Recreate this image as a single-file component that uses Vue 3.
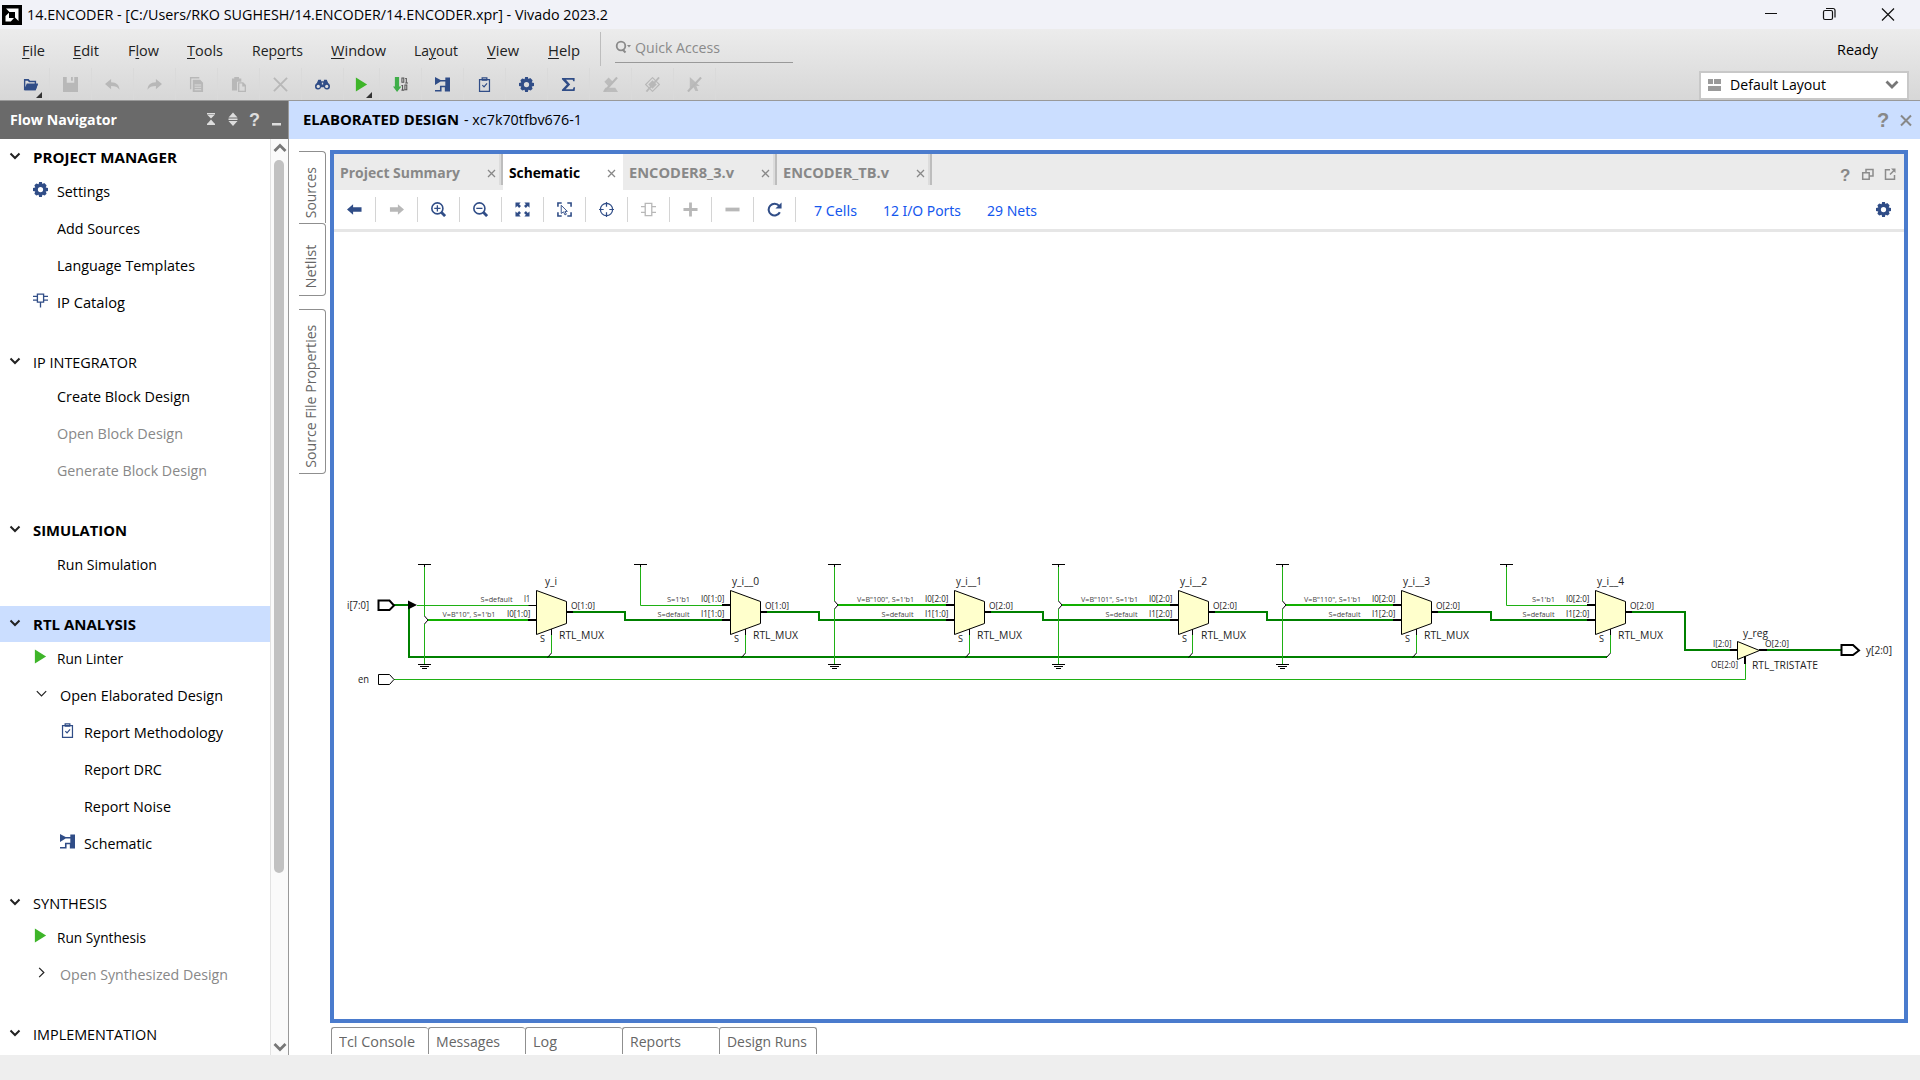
<script setup>
// Stretches or condenses a label so that it occupies exactly the given width.
const vFit = {
  mounted(el, { value }) {
    const apply = () => {
      el.style.width = 'max-content'
      el.style.transform = 'none'
      const natural = el.getBoundingClientRect().width
      el.style.width = value + 'px'
      if (natural > 0) el.style.transform = `scaleX(${value / natural})`
    }
    apply()
    document.fonts.ready.then(apply)
  },
}
const vFitV = {
  mounted(el, { value }) {
    const natural = el.getBoundingClientRect().height
    if (natural > 0) el.style.transform = `rotate(180deg) scaleY(${value / natural})`
  },
}

const menus = [
  { a: '', k: 'F', b: 'ile', x: 22, w: 23 },
  { a: '', k: 'E', b: 'dit', x: 73, w: 26 },
  { a: 'F', k: 'l', b: 'ow', x: 128, w: 31 },
  { a: '', k: 'T', b: 'ools', x: 187, w: 36 },
  { a: 'Rep', k: 'o', b: 'rts', x: 252, w: 51 },
  { a: '', k: 'W', b: 'indow', x: 331, w: 55 },
  { a: 'La', k: 'y', b: 'out', x: 414, w: 44 },
  { a: '', k: 'V', b: 'iew', x: 487, w: 32 },
  { a: '', k: 'H', b: 'elp', x: 548, w: 32 },
].map((m, i, all) => ({ ...m, gap: i ? m.x - all[i - 1].x - all[i - 1].w : m.x }))

const tools = [
  { icon: 'folder', menu: true }, { icon: 'save', off: true }, { icon: 'undo', off: true },
  { icon: 'redo', off: true }, { icon: 'copy', off: true }, { icon: 'paste', off: true },
  { icon: 'cross', off: true }, { icon: 'binoculars' }, { icon: 'play', menu: true, narrow: true },
  { icon: 'bits' }, { icon: 'schematic' }, { icon: 'clipboard' }, { icon: 'gear' },
  { icon: 'sigma' }, { icon: 'nomark', off: true }, { icon: 'nochip', off: true }, { icon: 'nocursor', off: true },
]

const sections = [
  { t: 'PROJECT MANAGER', w: 144, bold: true, items: [
    { t: 'Settings', w: 53, icon: 'gear' }, { t: 'Add Sources', w: 83 },
    { t: 'Language Templates', w: 138 }, { t: 'IP Catalog', w: 68, icon: 'ip' } ] },
  { t: 'IP INTEGRATOR', w: 104, items: [
    { t: 'Create Block Design', w: 133 }, { t: 'Open Block Design', w: 126, off: true },
    { t: 'Generate Block Design', w: 150, off: true } ] },
  { t: 'SIMULATION', w: 94, bold: true, items: [{ t: 'Run Simulation', w: 100 }] },
  { t: 'RTL ANALYSIS', w: 103, bold: true, active: true, items: [
    { t: 'Run Linter', w: 66, icon: 'play' },
    { t: 'Open Elaborated Design', w: 163, icon: 'down', kind: 'sub' },
    { t: 'Report Methodology', w: 139, icon: 'clipboard', kind: 'deep' },
    { t: 'Report DRC', w: 78, kind: 'deep' }, { t: 'Report Noise', w: 87, kind: 'deep' },
    { t: 'Schematic', w: 68, icon: 'schematic', kind: 'deep' } ] },
  { t: 'SYNTHESIS', w: 74, items: [
    { t: 'Run Synthesis', w: 89, icon: 'play' },
    { t: 'Open Synthesized Design', w: 168, icon: 'right', kind: 'sub', off: true } ] },
  { t: 'IMPLEMENTATION', w: 124, items: [] },
]

const sideTabs = [
  { t: 'Sources', h: 72, w: 51, pad: 10 }, { t: 'Netlist', h: 73, w: 44, pad: 15 }, { t: 'Source File Properties', h: 165, w: 143, pad: 10, apart: true },
]
const tabs = [
  { t: 'Project Summary', w: 120, tab: 169, line: true },
  { t: 'Schematic', w: 71, tab: 120, on: true },
  { t: 'ENCODER8_3.v', w: 105, tab: 154, line: true },
  { t: 'ENCODER_TB.v', w: 106, tab: 155, line: true },
]
const viewTools = [
  { icon: 'left' }, { icon: 'rightarrow', off: true }, { icon: 'zoomin' }, { icon: 'zoomout' }, { icon: 'fit' },
  { icon: 'select' }, { icon: 'target' }, { icon: 'cell', off: true }, { icon: 'plus', off: true },
  { icon: 'minus', off: true }, { icon: 'reload' },
]
const links = [{ t: '7 Cells', w: 43, gap: 18 }, { t: '12 I/O Ports', w: 78, gap: 26 }, { t: '29 Nets', w: 50, gap: 26 }]
const bottomTabs = [
  { t: 'Tcl Console', w: 76 }, { t: 'Messages', w: 64 }, { t: 'Log', w: 24 }, { t: 'Reports', w: 51 }, { t: 'Design Runs', w: 80 },
]

// Each mux: x of the body, s pin, tie-off column, next wire step, labels of its two inputs.
const muxes = [
  { x: 536.5, s: 551.5, tie: 424.5, step: 625, name: 'y_i', nx: 545, nw: 12, p0: 'I1', p1: 'I0[1:0]', o: 'O[1:0]', a: 'S=default', b: 'V=B"10", S=1\'b1', kind: 'first' },
  { x: 730.5, s: 745.5, tie: 640.5, step: 819, name: 'y_i__0', nx: 732, nw: 27, p0: 'I0[1:0]', p1: 'I1[1:0]', o: 'O[1:0]', a: 'S=1\'b1', b: 'S=default', kind: 'up' },
  { x: 954.5, s: 969.5, tie: 834.5, step: 1043, name: 'y_i__1', nx: 956, nw: 26, p0: 'I0[2:0]', p1: 'I1[1:0]', o: 'O[2:0]', a: 'V=B"100", S=1\'b1', b: 'S=default', kind: 'bus' },
  { x: 1178.5, s: 1192.5, tie: 1058.5, step: 1267, name: 'y_i__2', nx: 1180, nw: 27, p0: 'I0[2:0]', p1: 'I1[2:0]', o: 'O[2:0]', a: 'V=B"101", S=1\'b1', b: 'S=default', kind: 'bus' },
  { x: 1401.5, s: 1416.5, tie: 1282.5, step: 1491, name: 'y_i__3', nx: 1403, nw: 27, p0: 'I0[2:0]', p1: 'I1[2:0]', o: 'O[2:0]', a: 'V=B"110", S=1\'b1', b: 'S=default', kind: 'bus' },
  { x: 1595.5, s: 1610.5, tie: 1506.5, step: 1685, name: 'y_i__4', nx: 1597, nw: 27, p0: 'I0[2:0]', p1: 'I1[2:0]', o: 'O[2:0]', a: 'S=1\'b1', b: 'S=default', kind: 'up' },
]
const noteWidth = (s) => ({ 'S=default': 32, "S=1'b1": 23, 'V=B"10", S=1\'b1': 53 }[s] || 57)
const noteEnd = (m) => (m.kind === 'first' ? m.x - 24 : m.x - 40.5)
</script>

<template>
  <svg class="defs" width="0" height="0">
    <symbol id="folder" viewBox="0 0 16 16"><path d="M1 13V2h5l1.500 2H14v3h-1.500V5.500H6.500L5 4H2.500v7L4 7h12l-2.500 7H1z" /><path d="M4.500 7.500H16L13.500 14H2z" /></symbol>
    <symbol id="save" viewBox="0 0 16 16"><path d="M0 0h4v6h8V0h4v16H0z" /><path d="M8.500 0h2v4h-2z" /></symbol>
    <symbol id="undo" viewBox="0 0 16 16"><path d="M0 7.500 6.500 2v3.500c6 0 8.500 3 9 8C13.500 10.500 11 9.500 6.500 9.500V13z" /></symbol>
    <symbol id="redo" viewBox="0 0 16 16"><path d="M16 7.500 9.500 2v3.500c-6 0-8.500 3-9 8 2-3 4.500-4 9-4V13z" /></symbol>
    <symbol id="copy" viewBox="0 0 16 16"><path d="M1 0h10v1.500H2.500V13H1z" /><path fill-rule="evenodd" d="M4 3h8l3 3v10H4zm2 5v1h7V8zm0 2.500v1h7v-1zm0 2.500v1h7v-1z" /></symbol>
    <symbol id="paste" viewBox="0 0 16 16"><path d="M1 1.500h2.500V0h5v1.500H11V5H6.500v9.500H1z" /><path fill-rule="evenodd" d="M7.500 5.500H13l3 3V16H7.500zm1.400 1.400v7.700h5.700V10H12V6.900z" /></symbol>
    <symbol id="cross" viewBox="0 0 16 16"><path d="m1 1 14 14M15 1 1 15" fill="none" stroke="currentColor" stroke-width="2" /></symbol>
    <symbol id="binoculars" viewBox="0 0 16 16"><path d="M3.500 3h3v1.500h3V3h3l1.500 3.500c1.500.8 2 2 2 3.500a3.300 3.300 0 0 1-6.500.8h-3A3.300 3.300 0 0 1 0 10c0-1.500.5-2.700 2-3.500z" /><circle cx="3.500" cy="10" r="1.700" fill="#dfdfdf" /><circle cx="12.500" cy="10" r="1.700" fill="#dfdfdf" /><path d="M7.300 6h1.400v2H7.300z" fill="#dfdfdf" /></symbol>
    <symbol id="play" viewBox="0 0 16 16"><path d="M2 .5 14 8 2 15.500z" fill="#3eb529" /></symbol>
    <symbol id="bits" viewBox="0 0 16 16"><path d="M2 0h4.500v10H9l-4.700 6L0 10h2z" fill="#3fae49" /><g fill="none" stroke="#555" stroke-width="1.100"><path d="M9.500 1h2v4.500h-2zM13 1.500h1.200v4.500M9 9h1.200v4.500M12.700 8.500h2v5h-2zM13 6.300h3M9 14h3" /></g></symbol>
    <symbol id="schematic" viewBox="0 0 16 16"><path d="M0 0 6 3.200H11V.5h5v15h-5.500V11H7v4.500H0v-1.700h5.300V9.300H11V4.900H6L0 8.500z" /></symbol>
    <symbol id="clipboard" viewBox="0 0 16 16"><path d="M2.700 2.700h10.600v12.600H2.700zM5.500 3V1h5v2" fill="none" stroke="currentColor" stroke-width="1.300" /><path d="M5 2.500h6V4H5z" /><path d="m5.700 8.700 1.800 1.800 3.200-3.700" fill="none" stroke="currentColor" stroke-width="1.300" /></symbol>
    <symbol id="gear" viewBox="0 0 16 16"><path fill-rule="evenodd" d="M6.500 0h3l.5 2.200 2-1.200L14.500 3.500 13.600 5.800l2.400.7v3l-2.400.6.9 2.400-2 2-2.500-1-.5 2.500h-3L6 13.500l-2.500 1-2-2 .9-2.400L0 9.500v-3l2.400-.7L1.500 3.500l2-2L6 2.400zM8 5.200a2.800 2.800 0 1 0 0 5.600 2.800 2.800 0 0 0 0-5.600z" /></symbol>
    <symbol id="sigma" viewBox="0 0 16 16"><path d="M1 1h13.500v3.500H13L12.500 3H5.300l4.500 5-4.800 5h7.700l.7-2H15l-.5 4H1v-1.500L6.300 8 1 2.500z" /></symbol>
    <symbol id="nomark" viewBox="0 0 16 16"><path d="M1.500 5 6 .5 10.500 5 6 10zM0 16l2.500-4.500H13L16 16z" opacity=".9" /><path d="M15 .5 1.500 15.500" stroke="currentColor" stroke-width="2.200" /></symbol>
    <symbol id="nochip" viewBox="0 0 16 16"><path d="m8 .7 7.300 7.300L8 15.300.7 8z" fill="none" stroke="currentColor" stroke-width="1.200" /><path d="m8 3.500 4.500 4.500L8 12.500 3.500 8z" /><path d="M15 .5 1.500 15.500" stroke="currentColor" stroke-width="2" /></symbol>
    <symbol id="nocursor" viewBox="0 0 16 16"><path d="m3 0 10.500 9.500H10l2 5.500H9l-2-4-4 3z" opacity=".9" /><path d="M15 .5 1 15.500" stroke="currentColor" stroke-width="2.200" /></symbol>
    <symbol id="ip" viewBox="0 0 16 16"><path d="M4.700 1.200h6.600v8.600H4.700zM0 3.500h4.500M0 7.500h4.500M11.500 3.500H16M11.500 7.500H16M8 10v5.500" fill="none" stroke="currentColor" stroke-width="1.400" /></symbol>
    <symbol id="down" viewBox="0 0 16 16"><path d="m3 5.500 5 5 5-5" fill="none" stroke="#222" stroke-width="1.300" /></symbol>
    <symbol id="right" viewBox="0 0 16 16"><path d="m5.500 3 5 5-5 5" fill="none" stroke="#222" stroke-width="1.300" /></symbol>
    <symbol id="left" viewBox="0 0 16 16"><path d="m0 8 6.500-5.500v3H15.500v5h-9v3z" /></symbol>
    <symbol id="rightarrow" viewBox="0 0 16 16"><path d="M16 8 9.500 2.500v3H1v5h8.500v3z" /></symbol>
    <symbol id="zoomin" viewBox="0 0 16 16"><path d="M6.800 3.500v6.600M3.500 6.800h6.600" stroke="currentColor" stroke-width="1.400" /><circle cx="6.800" cy="6.800" r="5.900" fill="none" stroke="currentColor" stroke-width="1.700" /><path d="m11 11 4 4" stroke="currentColor" stroke-width="3" /></symbol>
    <symbol id="zoomout" viewBox="0 0 16 16"><path d="M3.500 6.800h6.600" stroke="currentColor" stroke-width="1.400" /><circle cx="6.800" cy="6.800" r="5.900" fill="none" stroke="currentColor" stroke-width="1.700" /><path d="m11 11 4 4" stroke="currentColor" stroke-width="3" /></symbol>
    <symbol id="fit" viewBox="0 0 16 16"><path d="M.5.500H6L4.400 2.300l2 2-2 2-2-2L.5 6zM15.500.5H10l1.600 1.800-2 2 2 2 2-2L15.500 6zM.5 15.500H6l-1.600-1.800 2-2-2-2-2 2L.5 10zM15.500 15.500H10l1.600-1.800-2-2 2-2 2 2L15.500 10z" /></symbol>
    <symbol id="select" viewBox="0 0 16 16"><path d="M1 5V1h4M11 1h4v4M15 11v4h-4M5 15H1v-4" fill="none" stroke="currentColor" stroke-width="1.700" /><path d="m4.500 3.500 6.500 6.500H8.500l1.500 3-1.500.8L7 10.500l-2.500 1.700z" fill="none" stroke="currentColor" /></symbol>
    <symbol id="target" viewBox="0 0 16 16"><circle cx="8" cy="8" r="6.500" fill="none" stroke="currentColor" stroke-width="1.300" /><path d="M8 0v5M8 11v5M0 8h5M11 8h5" stroke="currentColor" stroke-width="1.300" /></symbol>
    <symbol id="cell" viewBox="0 0 16 16"><path d="M4.500 1.500h7v13h-7zM0 5h4.500M0 11h4.500M11.500 5H16M11.500 11H16" fill="none" stroke="currentColor" stroke-width="1.400" /></symbol>
    <symbol id="plus" viewBox="0 0 16 16"><path d="M6.500.5h3v6h6v3h-6v6h-3v-6h-6v-3h6z" /></symbol>
    <symbol id="minus" viewBox="0 0 16 16"><path d="M.5 6h15v4H.5z" /></symbol>
    <symbol id="reload" viewBox="0 0 16 16"><path d="M13 4.200A6.300 6.300 0 1 0 13.700 11" fill="none" stroke="currentColor" stroke-width="2.200" /><path d="M15.500.5V7H9z" /></symbol>
  </svg>

  <div class="app">
    <header class="titlebar">
      <svg class="logo" viewBox="0 0 20 20"><path d="M0 0h20v20H0z" fill="#000" /><path d="M4 3.500h12.500V16L13 12.500V7H7.500zM3.500 11 7 7.800V13h5l-3.200 3.500H3.500z" fill="#fff" /></svg>
      <span v-fit="581" class="fit title">14.ENCODER - [C:/Users/RKO SUGHESH/14.ENCODER/14.ENCODER.xpr] - Vivado 2023.2</span>
      <svg class="winbtns" viewBox="0 0 160 29" fill="none" stroke="#111" stroke-width="1.200"><path d="M5 13.500h12M122 8.500l12 12M134 8.500l-12 12" /><rect x="63.500" y="10.500" width="9" height="9" rx="1.500" /><path d="M66 8.500h7q2 0 2 2v7" /></svg>
    </header>

    <div class="chrome">
      <div class="menurow">
        <span v-for="m in menus" :key="m.x" v-fit="m.w" class="fit menu" :style="{ marginLeft: m.gap + 'px' }">{{ m.a }}<u>{{ m.k }}</u>{{ m.b }}</span>
        <i class="vline"></i>
        <div class="search">
          <svg width="17" height="15" viewBox="0 0 17 15"><circle cx="6" cy="7" r="4.300" fill="none" stroke="#8a8a8a" stroke-width="1.800" /><path d="m7.500 10.500 3 3" stroke="#8a8a8a" stroke-width="2" /><path d="M12 6h4l-2 2.500z" fill="#8a8a8a" /></svg>
          <span v-fit="85" class="fit">Quick Access</span>
        </div>
        <span v-fit="41" class="fit ready">Ready</span>
      </div>
      <div class="toolrow">
        <div v-for="(t, i) in tools" :key="i" class="tool" :class="{ off: t.off, narrow: t.narrow }">
          <svg class="ico"><use :href="'#' + t.icon" /></svg>
          <svg v-if="t.menu" class="corner" viewBox="0 0 5 5"><path d="M5 0v5H0z" /></svg>
        </div>
        <div class="layout">
          <svg width="13" height="12" viewBox="0 0 13 12"><path d="M0 0h5v5H0zM6 0h7v5H6zM0 7h13v5H0z" fill="#9a9a9a" /></svg>
          <span v-fit="96" class="fit">Default Layout</span>
          <svg class="chev" width="14" height="10" viewBox="0 0 14 10"><path d="m1.500 1.500 5.500 5.500 5.500-5.500" fill="none" stroke="#777" stroke-width="2.800" /></svg>
        </div>
      </div>
    </div>

    <div class="body">
      <aside class="nav">
        <div class="navhead">
          <b v-fit="107" class="fit">Flow Navigator</b>
          <svg width="90" height="37" viewBox="0 0 90 37" fill="#ddd"><path d="M7 12h8v1.500H7zM7 24h8v-1.500H7zM11 17.500 7.500 14h7zM11 18.500l-3.500 4h7zM33 11.500l4.500 5h-9zM33 25l4.500-5h-9zM28.500 17.500h9v1.500h-9zM72 22h9v2.500h-9z" /><text x="49" y="25" class="q">?</text></svg>
        </div>
        <div class="navbody">
          <div class="tree">
            <section v-for="s in sections" :key="s.t">
              <div class="sec" :class="{ bold: s.bold, active: s.active }">
                <svg width="12" height="8" viewBox="0 0 12 8"><path d="m1.500 1.500 4.500 4.500 4.500-4.500" fill="none" stroke="#222" stroke-width="2" /></svg>
                <span v-fit="s.w" class="fit">{{ s.t }}</span>
              </div>
              <div v-for="it in s.items" :key="it.t" class="item" :class="[it.kind, { off: it.off }]">
                <span class="slot"><svg v-if="it.icon" class="ico"><use :href="'#' + it.icon" /></svg></span>
                <span v-fit="it.w" class="fit">{{ it.t }}</span>
              </div>
            </section>
          </div>
          <div class="scroll">
            <svg width="14" height="9" viewBox="0 0 14 9"><path d="m1.500 8 5.500-5.500L12.500 8" fill="none" stroke="#777" stroke-width="2.800" /></svg>
            <div class="thumb"></div>
            <svg width="14" height="9" viewBox="0 0 14 9"><path d="m1.500 1 5.500 5.500L12.500 1" fill="none" stroke="#777" stroke-width="2.800" /></svg>
          </div>
        </div>
      </aside>

      <main class="work">
        <div class="workhead">
          <b v-fit="156" class="fit">ELABORATED DESIGN</b>
          <span v-fit="118" class="fit part">- xc7k70tfbv676-1</span>
          <svg width="48" height="37" viewBox="0 0 48 37"><text x="5" y="26" class="q dark">?</text><path d="m29 14.500 10 10M39 14.500l-10 10" stroke="#888" stroke-width="2" /></svg>
        </div>
        <div class="workbody">
          <div class="sidetabs">
            <div v-for="s in sideTabs" :key="s.t" class="sidetab" :class="{ apart: s.apart }" :style="{ height: s.h + 'px', paddingTop: s.pad + 'px' }">
              <span v-fit-v="s.w">{{ s.t }}</span>
            </div>
          </div>
          <div class="center">
            <div class="frame">
              <div class="tabs">
                <div v-for="t in tabs" :key="t.t" class="tab" :class="{ on: t.on, line: t.line }" :style="{ width: t.tab + 'px' }">
                  <b v-fit="t.w" class="fit">{{ t.t }}</b>
                  <svg width="9" height="9" viewBox="0 0 9 9"><path d="m1 1 7 7M8 1 1 8" stroke="#888" stroke-width="1.300" /></svg>
                </div>
                <svg class="tabctl" width="64" height="36" viewBox="0 0 64 36" fill="none" stroke="#8c8c8c" stroke-width="1.500"><text x="0" y="27" class="q dark small">?</text><path d="M22.700 18.700h6.500v6.500h-6.500zM26 18v-2.500h7v6.500h-3.500M50 15.800h-4.500v9.500h9V21M50 20.500l4-4" /><path d="M51 14.500h4.500V19z" fill="#8c8c8c" stroke="none" /></svg>
              </div>
              <div class="viewbar">
                <div v-for="(t, i) in viewTools" :key="i" class="vtool" :class="{ off: t.off }"><svg class="ico"><use :href="'#' + t.icon" /></svg></div>
                <span v-for="l in links" :key="l.t" v-fit="l.w" class="fit link" :style="{ marginLeft: l.gap + 'px' }">{{ l.t }}</span>
                <svg class="ico end"><use href="#gear" /></svg>
              </div>
              <svg class="canvas" viewBox="334 232 1570 787">
                <g class="bus">
                  <path d="M394 605H409M409 605V657H1607" />
                  <path d="M1685 650H1730M1767 650H1841" />
                </g>
                <g class="net">
                  <path d="M417 605.500H529M394 679.500H1745.500V664" />
                </g>
                <g v-for="(m, i) in muxes" :key="m.name">
                  <path class="bus" :d="`M${m.x + 36.500} 612H${m.step}V${i === 5 ? 651 : 620}H${i === 5 ? m.step : muxes[i + 1].x - 8}`" />
                  <template v-if="m.kind === 'up'">
                    <path class="net" :d="`M${m.tie} 566V605.500H${m.x - 8}`" />
                  </template>
                  <template v-else>
                    <path class="net" :d="`M${m.tie} 566V${m.kind === 'first' ? 616 : 601}M${m.tie} ${m.kind === 'first' ? 624 : 609}V664`" />
                    <path class="ink" :d="m.kind === 'first' ? `M${m.tie} 616L${m.tie + 3.500} 620L${m.tie} 624` : `M${m.tie} 601L${m.tie + 3.500} 605L${m.tie} 609`" />
                    <path class="bright" :d="`M${m.tie + 3.500} ${m.kind === 'first' ? 620 : 605}H${m.x - 8}`" />
                    <path class="ink crisp" :d="`M${m.tie - 6.500} 664.500h13M${m.tie - 4.500} 666.500h9M${m.tie - 2.500} 668.500h5`" />
                  </template>
                  <path class="ink crisp" :d="`M${m.tie - 6.500} 564.500h13M${m.tie} 564v3`" />
                  <path class="net" :d="`M${m.s} 635V653`" />
                  <path class="ink" :d="`M${m.s} 628V635M${m.s} 653L${m.s - 4} 657.500`" />
                  <path v-if="m.kind === 'first'" class="ink" :d="`M${m.x - 8} 605.500h8`" />
                  <path v-else class="pin" :d="`M${m.x - 8.500} 605h8`" />
                  <path class="pin" :d="`M${m.x - 8.500} 620h8M${m.x + 30} 612h6.500`" />
                  <path class="cell" :d="`M${m.x} 590.500l30 11v22l-30 11z`" />
                  <text class="name" :x="m.nx" y="585" :textLength="m.nw" lengthAdjust="spacingAndGlyphs">{{ m.name }}</text>
                  <text class="name" :x="m.x + 22.500" y="639" textLength="45" lengthAdjust="spacingAndGlyphs">RTL_MUX</text>
                  <text class="port" :x="m.x + 3.500" y="641.500" textLength="5" lengthAdjust="spacingAndGlyphs">S</text>
                  <text class="port" :x="m.x + 34.500" y="609" textLength="24" lengthAdjust="spacingAndGlyphs">{{ m.o }}</text>
                  <text class="port" :x="m.x - (m.p0 === 'I1' ? 12.500 : 29.500)" y="602" :textLength="m.p0 === 'I1' ? 6 : 23.500" lengthAdjust="spacingAndGlyphs">{{ m.p0 }}</text>
                  <text class="port" :x="m.x - 29.500" y="617" textLength="23.500" lengthAdjust="spacingAndGlyphs">{{ m.p1 }}</text>
                  <text class="note" :x="noteEnd(m) - noteWidth(m.a)" y="602" :textLength="noteWidth(m.a)" lengthAdjust="spacingAndGlyphs">{{ m.a }}</text>
                  <text class="note" :x="m.x - 41 - noteWidth(m.b)" y="617" :textLength="noteWidth(m.b)" lengthAdjust="spacingAndGlyphs">{{ m.b }}</text>
                </g>
                <path d="M408 600.500 417 605l-9 4.500z" />
                <path class="pin" d="M378.500 600.500H389.500L394 605.500 389.500 610H378.500zM1841.500 645H1853L1859 650.500 1853 655H1841.500z" />
                <path class="ink" d="M378.500 674.500H389.500L394 679.500 389.500 684.500H378.500z" />
                <path class="pin" d="M1730 650h8M1759 650h8" />
                <path class="cell" d="M1737.500 641.500 1759.500 650.500 1737.500 659.500z" />
                <path class="pin" d="M1745 656v8" />
                <text class="name" x="347" y="609" textLength="22" lengthAdjust="spacingAndGlyphs">i[7:0]</text>
                <text class="name" x="358" y="683" textLength="11" lengthAdjust="spacingAndGlyphs">en</text>
                <text class="name" x="1866" y="654" textLength="26" lengthAdjust="spacingAndGlyphs">y[2:0]</text>
                <text class="name" x="1743" y="637" textLength="25" lengthAdjust="spacingAndGlyphs">y_reg</text>
                <text class="name" x="1752" y="669" textLength="66" lengthAdjust="spacingAndGlyphs">RTL_TRISTATE</text>
                <text class="port" x="1713" y="647" textLength="18.500" lengthAdjust="spacingAndGlyphs">I[2:0]</text>
                <text class="port" x="1765" y="647" textLength="24" lengthAdjust="spacingAndGlyphs">O[2:0]</text>
                <text class="port" x="1711" y="668" textLength="27" lengthAdjust="spacingAndGlyphs">OE[2:0]</text>
              </svg>
            </div>
            <div class="bottomtabs">
              <div v-for="b in bottomTabs" :key="b.t" class="btab"><span v-fit="b.w" class="fit">{{ b.t }}</span></div>
            </div>
          </div>
        </div>
      </main>
    </div>
    <footer class="status"></footer>
  </div>
</template>

<style>
html, body { margin: 0; overflow: hidden; }
</style>

<style scoped>
.defs { position: absolute; }
.app { width: 1920px; height: 1080px; display: flex; flex-direction: column; background: #fff; color: #000; font: 15px/20px "Open Sans", "Noto Sans", sans-serif; overflow: hidden; }
svg { display: block; flex: none; }
.fit { display: block; flex: none; white-space: nowrap; transform-origin: 0 50%; }
.ico { width: 15px; height: 15px; fill: currentColor; overflow: visible; }
.titlebar { height: 29px; flex: none; display: flex; align-items: center; background: #f1f2f8; padding-left: 2px; }
.logo { width: 20px; height: 20px; margin-right: 5px; }
.title { margin-bottom: 2px; }
.winbtns { width: 160px; height: 29px; margin-left: auto; }
.chrome { height: 71px; flex: none; background: linear-gradient(#ececec, #d7d7d7); border-bottom: 1px solid #999; color: #222; }
.menurow { height: 39px; display: flex; align-items: flex-start; }
.menu { margin-top: 11px; }
.menu u { text-underline-offset: 2px; text-decoration-thickness: 1px; }
.vline { width: 1px; height: 34px; margin: 3px 14px 0 20px; background: #bdbdbd; }
.search { width: 178px; height: 31px; display: flex; align-items: center; border-bottom: 1px solid #999; color: #8a8a8a; gap: 3px; padding-top: 2px; }
.ready { margin: 10px 42px 0 auto; color: #000; }
.toolrow { height: 32px; display: flex; align-items: center; padding-left: 7px; }
.tool { position: relative; width: 41px; height: 32px; border-right: 1px solid #dadada; display: flex; align-items: center; justify-content: center; color: #304d87; }
.tool:nth-child(1) { padding-left: 4px; width: 38px; }
.tool.narrow { width: 35px; }
.off { color: #b4b4b4; }
.corner { position: absolute; right: 7px; bottom: 2px; width: 6px; height: 6px; fill: #333; }
.layout { margin: 2px 11px 0 auto; width: 199px; height: 25px; border: 2px solid #c8c8c8; background: #fff; display: flex; align-items: center; color: #000; padding-left: 7px; gap: 9px; }
.layout .fit { margin-bottom: 2px; }
.layout .chev { margin-left: auto; margin-right: 8px; }
.body { height: 954px; flex: none; display: flex; }
.nav { width: 288px; flex: none; border-right: 1px solid #999; display: flex; flex-direction: column; }
.navhead { height: 38px; box-sizing: border-box; background: #6a6a6a; color: #fff; display: flex; align-items: center; justify-content: space-between; padding: 0 0 2px 10px; flex: none; }
.navhead svg { margin-right: -2px; }
.q { font: bold 18px "Liberation Sans", sans-serif; fill: #ddd; }
.q.dark { fill: #888; stroke: none; font-size: 20px; }
.q.small { font-size: 17px; }
.navbody { flex: 1; display: flex; min-height: 0; }
.tree { width: 270px; overflow: hidden; flex: none; }
section { margin-bottom: 22px; }
.sec { height: 36px; display: flex; align-items: center; padding-left: 9px; gap: 12px; }
.sec svg { margin-bottom: 3px; }
.sec.active { background: #cbdeff; }
.bold { font-weight: 700; }
.item { height: 37px; box-sizing: border-box; display: flex; align-items: center; padding: 0 0 4px 33px; gap: 9px; }
.sec + .item { margin-top: -1px; }
.item.sub { padding-left: 34px; gap: 11px; }
.item.deep { padding-left: 60px; }
.item.off > .fit { color: #888; }
.slot { width: 15px; height: 17px; color: #304d87; flex: none; }
.scroll { width: 17px; border-left: 1px solid #e2e2e2; background: #fafafa; display: flex; flex-direction: column; align-items: center; padding: 4px 0 3px; }
.thumb { width: 10px; height: 713px; margin: 8px 2px auto 0; border-radius: 5px; background: #c1c1c1; }
.work { flex: 1; display: flex; flex-direction: column; min-width: 0; }
.workhead { height: 38px; box-sizing: border-box; flex: none; background: #cbdeff; display: flex; align-items: center; padding: 0 0 2px 14px; }
.workhead svg { margin-left: auto; }
.part { margin-left: 5px; }
.workbody { flex: 1; display: flex; min-height: 0; }
.sidetabs { width: 41px; flex: none; padding: 12px 0 0 10px; box-sizing: border-box; }
.sidetab { width: 27px; box-sizing: border-box; border: 1px solid #8f8f8f; border-left: 0; border-bottom: 0; border-radius: 0 4px 0 0; color: #666; display: flex; justify-content: center; align-items: center; padding-right: 5px; }
.sidetab + .sidetab { border-bottom: 1px solid #8f8f8f; border-radius: 0 4px 4px 0; }
.sidetab.apart { margin-top: 13px; }
.sidetab span { writing-mode: vertical-rl; transform: rotate(180deg); white-space: nowrap; line-height: 20px; }
.center { flex: 1; display: flex; flex-direction: column; padding-top: 11px; min-width: 0; }
.frame { width: 1570px; height: 865px; flex: none; border: 4px solid #4a7bcd; display: flex; flex-direction: column; }
.tabs { height: 36px; flex: none; background: #ebebeb; display: flex; color: #888; }
.tab { position: relative; box-sizing: border-box; display: flex; justify-content: space-between; align-items: center; padding: 2px 7px 0 6px; }
.tab .fit { margin-bottom: 2px; }
.tab.line::after { content: ""; position: absolute; right: 0; top: 0; width: 2px; height: 31px; background: #bdbdbd; border-left: 2px solid #dcdcdc; }
.tab.on { background: #fff; color: #000; }
.tabctl { margin-left: auto; }
.viewbar { height: 39px; flex: none; border-bottom: 3px solid #e6e6e6; display: flex; align-items: center; color: #304d87; }
.vtool { width: 42px; height: 25px; box-sizing: border-box; border-right: 1px solid #d4d4d4; display: flex; align-items: center; justify-content: center; color: #304d87; }
.vtool.off, .tool.off { color: #b8b8b8; }
.link { color: #1457ee; font-family: "Noto Sans", sans-serif; }
.end { margin-left: auto; margin-right: 13px; }
.canvas { width: 1570px; height: 787px; }
.canvas text { font-family: "Open Sans", sans-serif; fill: #222; }
.canvas .name { font-size: 10.500px; }
.canvas .port { font-size: 8.800px; }
.canvas .note { font-size: 7.200px; fill: #444; }
.bus, .bus path { fill: none; stroke: #008000; stroke-width: 2; }
.net, .net path { fill: none; stroke: #1fb014; stroke-width: 1; }
.bright { fill: none; stroke: #12b000; stroke-width: 2; }
.ink { fill: none; stroke: #000; stroke-width: 1; }
.crisp { shape-rendering: crispEdges; }
.pin { fill: none; stroke: #000; stroke-width: 2; }
.cell { fill: #ffffcc; stroke: #000; stroke-width: 1; }
.bottomtabs { display: flex; padding: 4px 0 0 1px; color: #666; }
.btab { width: 97px; height: 27px; box-sizing: border-box; border: 1px solid #8f8f8f; border-bottom: 0; border-right: 0; border-radius: 3px 3px 0 0; padding: 3px 0 0 7px; }
.btab:last-child { width: 98px; border-right: 1px solid #8f8f8f; }
.status { flex: 1; background: #eee; }
</style>
